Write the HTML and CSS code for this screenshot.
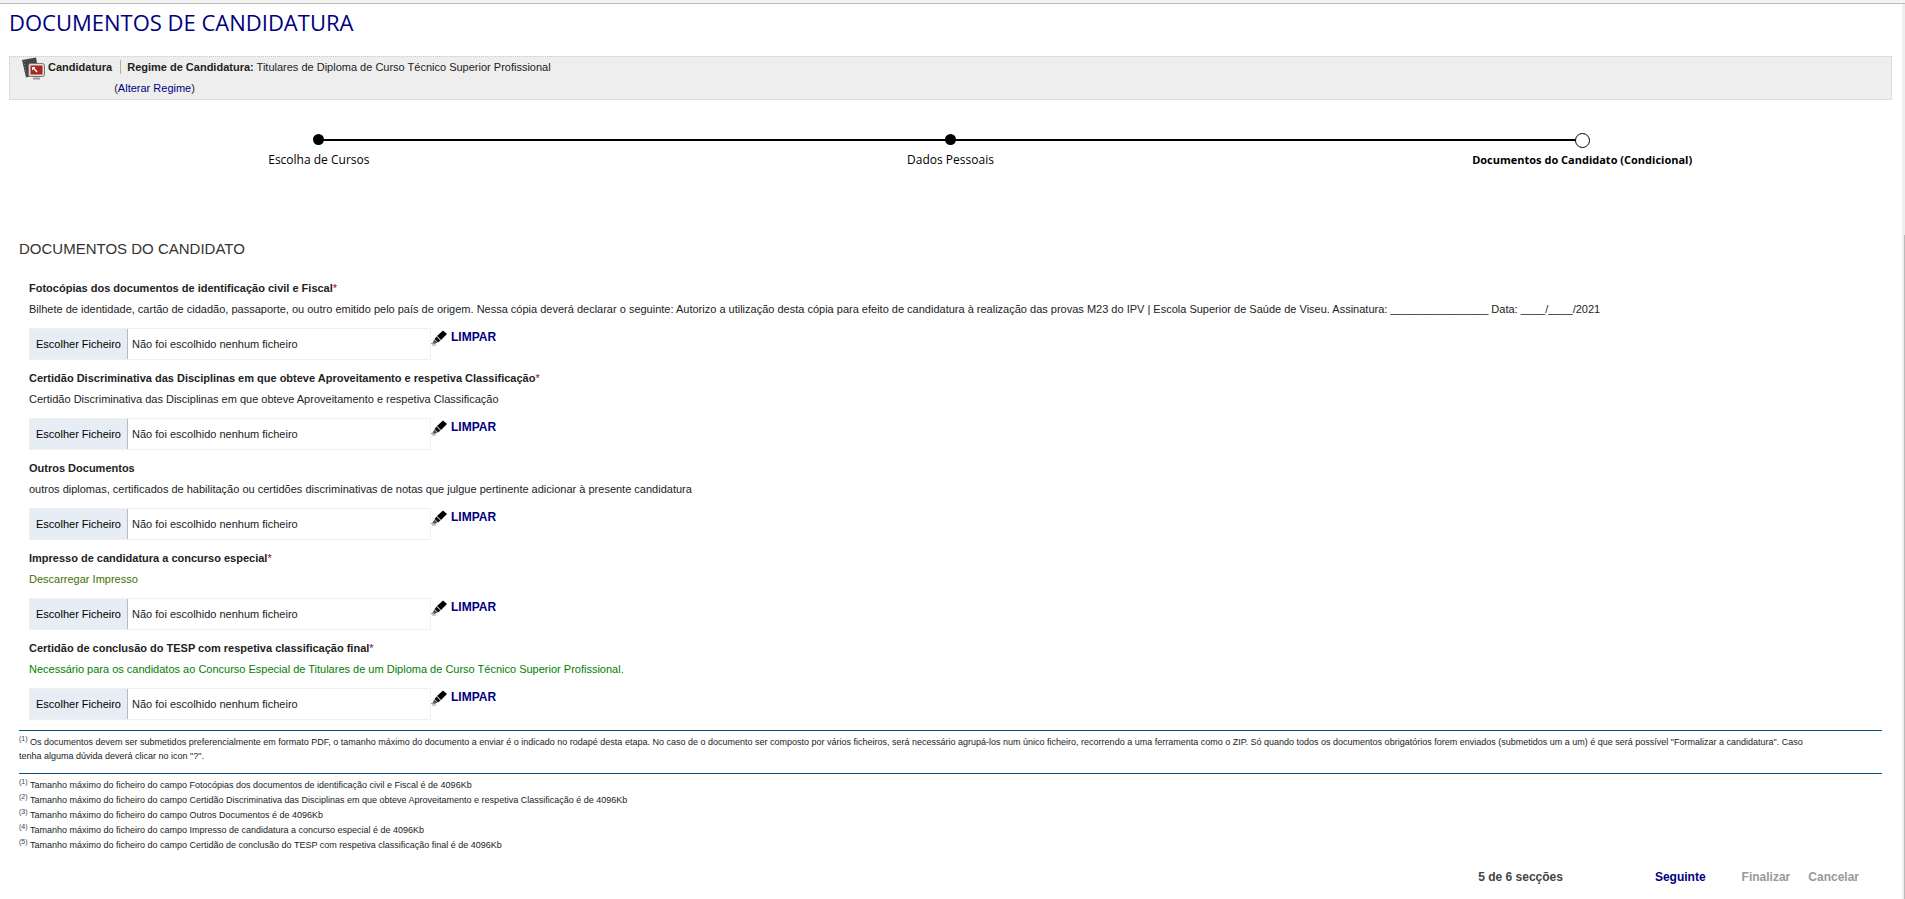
FILE: index.html
```html
<!DOCTYPE html>
<html lang="pt">
<head>
    <meta charset="utf-8">
    <title>Documentos de Candidatura</title>
    <link rel="stylesheet" href="styles.css">
</head>
<body>
    <svg class="sprite" width="0" height="0">
        <symbol id="pen" viewBox="0 0 16 16">
            <path d="M12 0.500l4 3.500-6 6-4-4z" fill="#000"/>
            <path d="M5.500 6.500l4 4-2.500 2-3.500-3.500z" fill="#111"/>
            <path d="M5.800 6.200l4 4" stroke="#999" stroke-width="0.600"/>
            <path d="M3.500 9.500l3 3-3 1.500-2-1.500z" fill="#555"/>
            <path d="M0 13.500h3M1 15h4" stroke="#999"/>
        </symbol>
    </svg>

    <main class="page">
        <h1 class="page-title">DOCUMENTOS DE CANDIDATURA</h1>

        <div class="context-bar">
            <svg class="context-icon" viewBox="0 0 24 24">
                <path d="M1 3l14-2.500 3 16-13 4z" fill="#444"/>
                <path d="M3 4l2.500 14" stroke="#888" stroke-dasharray="1 2"/>
                <rect x="7.500" y="6.500" width="16" height="13" rx="2" fill="#ddd" stroke="#777"/>
                <rect x="9.500" y="8.500" width="12" height="9" fill="#a8281c"/>
                <path d="M12 10.500l4 4.500" stroke="#fff" stroke-width="1.500"/>
                <path d="M11 10h3.500l-3.500 3.500z" fill="#fff"/>
                <path d="M12 21.500h7" stroke="#999" stroke-width="2"/>
            </svg>
            <strong class="context-name">Candidatura</strong>
            <div class="context-info">
                <p class="regime"><strong>Regime de Candidatura:</strong> Titulares de Diploma de Curso Técnico Superior Profissional</p>
                <p class="change">(<a href="#">Alterar Regime</a>)</p>
            </div>
        </div>

        <ol class="steps">
            <li class="step">Escolha de Cursos</li>
            <li class="step">Dados Pessoais</li>
            <li class="step current">Documentos do Candidato (Condicional)</li>
        </ol>

        <form class="documents">
            <h2 class="section-title">DOCUMENTOS DO CANDIDATO</h2>

            <div class="field">
                <label class="field-label" for="doc1">Fotocópias dos documentos de identificação civil e Fiscal<span class="required">*</span></label>
                <p class="field-desc">Bilhete de identidade, cartão de cidadão, passaporte, ou outro emitido pelo país de origem. Nessa cópia deverá declarar o seguinte: Autorizo a utilização desta cópia para efeito de candidatura à realização das provas M23 do IPV | Escola Superior de Saúde de Viseu. Assinatura: ________________ Data: ____/____/2021</p>
                <div class="file-row">
                    <input type="file" id="doc1" class="file-input">
                    <label class="file-box" for="doc1"><span class="file-button">Escolher Ficheiro</span><span class="file-name">Não foi escolhido nenhum ficheiro</span></label>
                    <button type="button" class="clear"><svg class="pen"><use href="#pen"/></svg>LIMPAR</button>
                </div>
            </div>

            <div class="field">
                <label class="field-label" for="doc2">Certidão Discriminativa das Disciplinas em que obteve Aproveitamento e respetiva Classificação<span class="required">*</span></label>
                <p class="field-desc">Certidão Discriminativa das Disciplinas em que obteve Aproveitamento e respetiva Classificação</p>
                <div class="file-row">
                    <input type="file" id="doc2" class="file-input">
                    <label class="file-box" for="doc2"><span class="file-button">Escolher Ficheiro</span><span class="file-name">Não foi escolhido nenhum ficheiro</span></label>
                    <button type="button" class="clear"><svg class="pen"><use href="#pen"/></svg>LIMPAR</button>
                </div>
            </div>

            <div class="field">
                <label class="field-label" for="doc3">Outros Documentos</label>
                <p class="field-desc">outros diplomas, certificados de habilitação ou certidões discriminativas de notas que julgue pertinente adicionar à presente candidatura</p>
                <div class="file-row">
                    <input type="file" id="doc3" class="file-input">
                    <label class="file-box" for="doc3"><span class="file-button">Escolher Ficheiro</span><span class="file-name">Não foi escolhido nenhum ficheiro</span></label>
                    <button type="button" class="clear"><svg class="pen"><use href="#pen"/></svg>LIMPAR</button>
                </div>
            </div>

            <div class="field">
                <label class="field-label" for="doc4">Impresso de candidatura a concurso especial<span class="required">*</span></label>
                <p class="field-desc"><a class="download" href="#">Descarregar Impresso</a></p>
                <div class="file-row">
                    <input type="file" id="doc4" class="file-input">
                    <label class="file-box" for="doc4"><span class="file-button">Escolher Ficheiro</span><span class="file-name">Não foi escolhido nenhum ficheiro</span></label>
                    <button type="button" class="clear"><svg class="pen"><use href="#pen"/></svg>LIMPAR</button>
                </div>
            </div>

            <div class="field">
                <label class="field-label" for="doc5">Certidão de conclusão do TESP com respetiva classificação final<span class="required">*</span></label>
                <p class="field-desc note">Necessário para os candidatos ao Concurso Especial de Titulares de um Diploma de Curso Técnico Superior Profissional.</p>
                <div class="file-row">
                    <input type="file" id="doc5" class="file-input">
                    <label class="file-box" for="doc5"><span class="file-button">Escolher Ficheiro</span><span class="file-name">Não foi escolhido nenhum ficheiro</span></label>
                    <button type="button" class="clear"><svg class="pen"><use href="#pen"/></svg>LIMPAR</button>
                </div>
            </div>

            <p class="help"><sup>(1)</sup> Os documentos devem ser submetidos preferencialmente em formato PDF, o tamanho máximo do documento a enviar é o indicado no rodapé desta etapa. No caso de o documento ser composto por vários ficheiros, será necessário agrupá-los num único ficheiro, recorrendo a uma ferramenta como o ZIP. Só quando todos os documentos obrigatórios forem enviados (submetidos um a um) é que será possível "Formalizar a candidatura". Caso tenha alguma dúvida deverá clicar no icon "?".</p>

            <ul class="limits">
                <li><sup>(1)</sup> Tamanho máximo do ficheiro do campo Fotocópias dos documentos de identificação civil e Fiscal é de 4096Kb</li>
                <li><sup>(2)</sup> Tamanho máximo do ficheiro do campo Certidão Discriminativa das Disciplinas em que obteve Aproveitamento e respetiva Classificação é de 4096Kb</li>
                <li><sup>(3)</sup> Tamanho máximo do ficheiro do campo Outros Documentos é de 4096Kb</li>
                <li><sup>(4)</sup> Tamanho máximo do ficheiro do campo Impresso de candidatura a concurso especial é de 4096Kb</li>
                <li><sup>(5)</sup> Tamanho máximo do ficheiro do campo Certidão de conclusão do TESP com respetiva classificação final é de 4096Kb</li>
            </ul>

            <div class="actions">
                <span class="progress">5 de 6 secções</span>
                <button type="submit" class="next">Seguinte</button>
                <button type="button" disabled>Finalizar</button>
                <button type="button" disabled>Cancelar</button>
            </div>
        </form>
    </main>
</body>
</html>
```
FILE: styles.css
```css
* {
    box-sizing: border-box;
}

body {
    margin: 0;
    font-family: "Liberation Sans", Arial, sans-serif;
    font-size: 11px;
    line-height: 21px;
    color: #222;
    background: #fff;
}

h1, h2, p, ol, ul {
    margin: 0;
    padding: 0;
    font-weight: normal;
    list-style: none;
}

a {
    color: #000080;
    text-decoration: none;
}

button {
    padding: 0;
    border: none;
    background: none;
    font: bold 12px/18px "Liberation Sans", Arial, sans-serif;
    color: #000080;
    cursor: pointer;
}

.sprite {
    position: absolute;
}

.page {
    position: relative;
    min-height: 100vh;
    padding-bottom: 12px;
    border-right: 3px solid #eee;
}

.page::before {
    content: "";
    display: block;
    height: 3px;
    margin-right: -3px;
    border-bottom: 1px solid #bbb;
    background: #f4f4f4;
}

/* scroll thumb at the window edge */
.page::after {
    content: "";
    position: absolute;
    top: 235px;
    right: -3px;
    bottom: 0;
    width: 1px;
    background: #bbb;
}

.page-title {
    margin: 3px 9px 18px;
    font-family: "Open Sans", sans-serif;
    font-size: 22px;
    line-height: 31px;
    color: #000080;
}

.context-bar {
    display: flex;
    align-items: flex-start;
    margin: 0 10px 0 9px;
    padding: 0 11px;
    border: 1px dotted #ccc;
    background: #eee;
}

.context-icon {
    width: 24px;
    height: 24px;
    margin-right: 3px;
}

.regime {
    margin-left: 8px;
    padding-left: 6px;
    border-left: 1px solid #b5b09a;
    line-height: 14px;
    margin-top: 3px;
    margin-bottom: 4px;
}

.change {
    margin-left: 2px;
}

/* progress steps */
.steps {
    display: flex;
    margin: 32px 4px 0 3px;
}

.step {
    position: relative;
    flex: 1;
    padding-top: 17px;
    font-family: "Open Sans", sans-serif;
    font-size: 12px;
    text-align: center;
    color: #000;
}

.step::before {
    content: "";
    position: absolute;
    top: 2px;
    left: calc(50% - 6px);
    z-index: 1;
    width: 11px;
    height: 11px;
    border-radius: 50%;
    background: #000;
}

.step + .step::after {
    content: "";
    position: absolute;
    top: 7px;
    left: -50%;
    width: 100%;
    height: 2px;
    background: #000;
}

.step.current {
    font-size: 11px;
    font-weight: bold;
}

.step.current::before {
    top: 1px;
    left: calc(50% - 7px);
    width: 13px;
    height: 13px;
    border: 1px solid #000;
    background: #fff;
}

/* documents */
.documents {
    padding: 68px 20px 0 19px;
}

.section-title {
    margin-bottom: 18px;
    font-size: 15px;
    line-height: 22px;
    color: #333;
}

.field {
    margin: 0 10px;
}

.field-label {
    display: block;
    font-weight: bold;
}

.required {
    font-weight: normal;
    color: #a00020;
}

.note {
    color: #008000;
}

.download {
    color: #3f6f00;
}

.file-row {
    position: relative;
    display: flex;
    align-items: flex-start;
    height: 48px;
    padding-top: 8px;
}

.file-input {
    position: absolute;
    width: 1px;
    height: 1px;
    opacity: 0;
}

.file-box {
    display: flex;
    width: 402px;
    border: 1px solid #f0f0f0;
    line-height: 30px;
    cursor: pointer;
}

.file-button {
    padding: 0 6px;
    border-right: 1px solid #bbb;
    background: #e6edf5;
    color: #000;
}

.file-name {
    padding-left: 4px;
}

.clear {
    display: flex;
}

.pen {
    width: 16px;
    height: 16px;
    margin: 2px 4px 0 0;
}

/* notes */
.help,
.limits {
    font-size: 9px;
}

.help {
    margin-top: 2px;
    padding: 4px 64px 10px 0;
    border: solid #0f5078;
    border-width: 1px 0;
    line-height: 14px;
}

sup {
    font-size: 7px;
    line-height: 0;
    color: #345;
}

.limits {
    padding-top: 4px;
    line-height: 15px;
}

.actions {
    display: flex;
    justify-content: flex-end;
    margin-top: 15px;
    padding-right: 23px;
    font-size: 12px;
    font-weight: bold;
    line-height: 18px;
}

.actions button:disabled {
    margin-left: 18px;
    color: #999;
}

.progress {
    margin-right: 92px;
    color: #444;
}

.actions .next {
    margin-right: 18px;
}
```
